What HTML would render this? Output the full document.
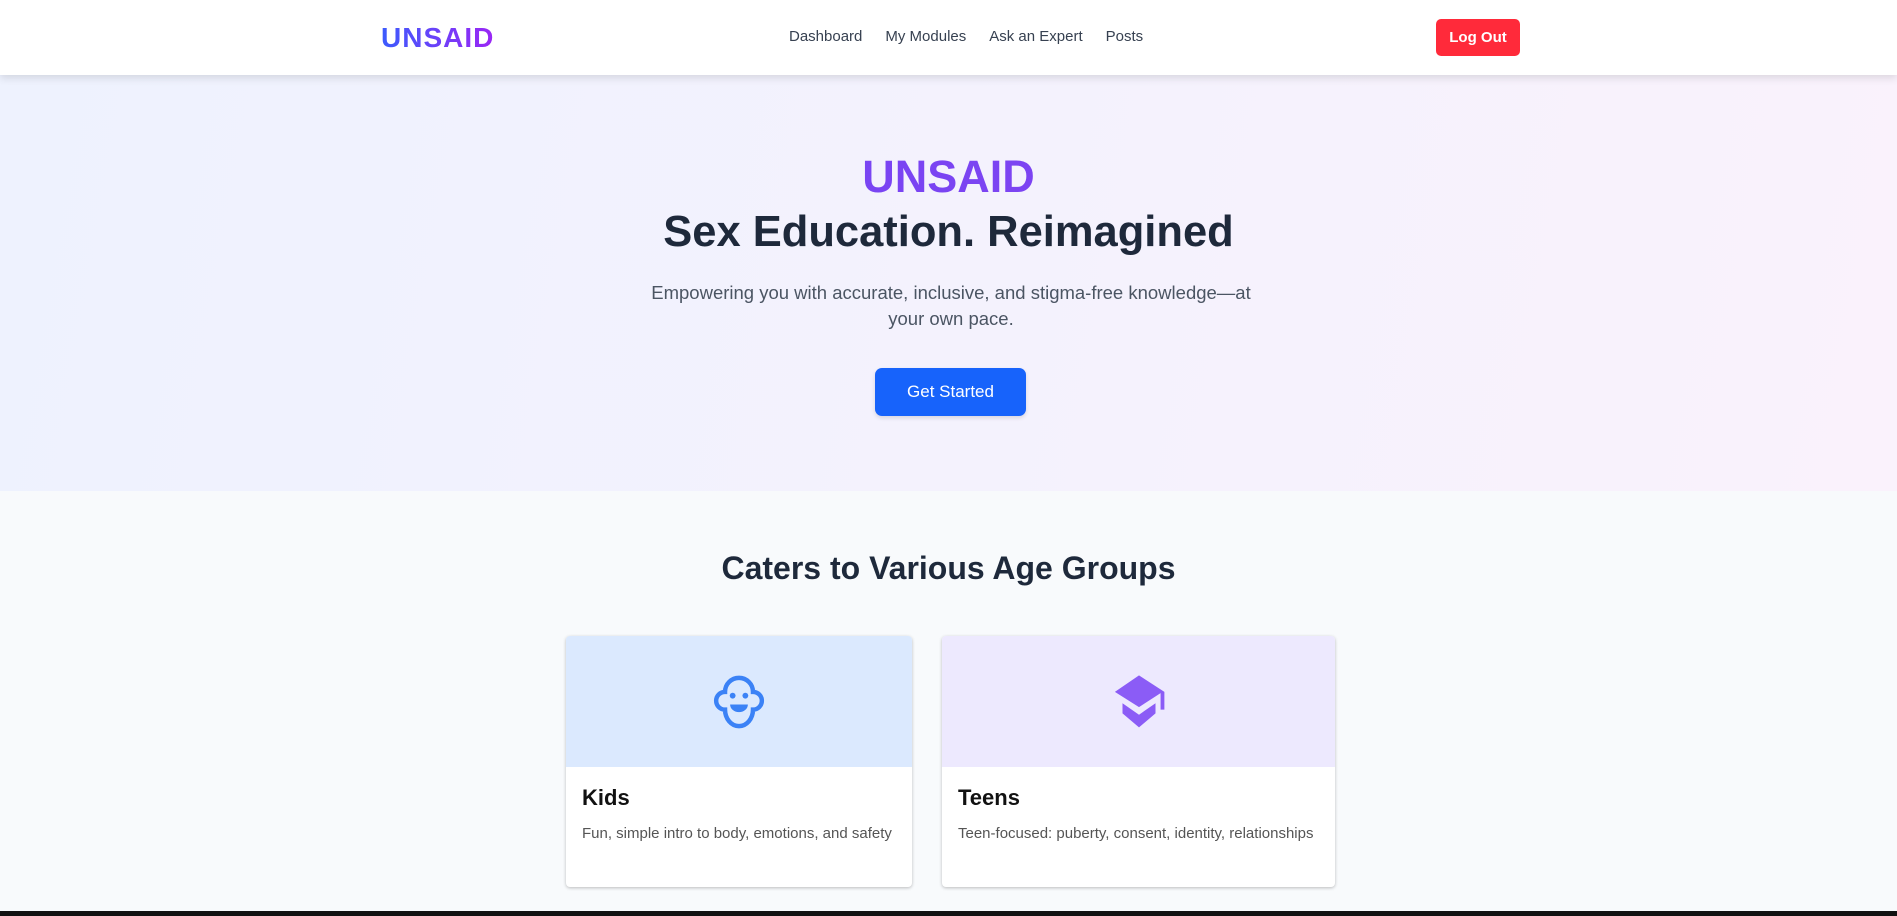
<!DOCTYPE html>
<html><head><meta charset="utf-8"><style>
*{margin:0;padding:0;box-sizing:border-box}
body{width:1897px;height:916px;overflow:hidden;font-family:"Liberation Sans",Arial,sans-serif;background:#f8fafc;position:relative}
nav{position:absolute;top:0;left:0;width:1897px;height:75px;background:#fff;box-shadow:0 3px 8px rgba(0,0,0,.12);z-index:2}
.logo{position:absolute;left:381px;top:22px;font-size:28px;font-weight:bold;letter-spacing:1px;background:linear-gradient(90deg,#3b5bfd,#9b26f5);-webkit-background-clip:text;color:transparent}
.links{position:absolute;left:789px;top:28px;font-size:15px;color:#374151;display:flex;gap:23px}
.btn-out{position:absolute;left:1436px;top:19px;width:84px;height:37px;background:#ff2a3a;color:#fff;border-radius:5px;font-size:15px;font-weight:bold;text-align:center;line-height:37px}
.hero{position:absolute;top:75px;left:0;width:1897px;height:416px;background:linear-gradient(100deg,#eef2fe,#f5f2fd 60%,#faf2fc);text-align:center}
.h-logo{position:absolute;left:0;width:100%;top:76px;font-size:45px;font-weight:bold;background:linear-gradient(90deg,#6a4cf5,#8b3cf0);-webkit-background-clip:text;color:transparent}
h1{position:absolute;left:0;width:100%;top:133px;font-size:43.5px;color:#1e293b;font-weight:bold}
.sub{position:absolute;left:638px;width:626px;top:205px;font-size:18.5px;line-height:26px;color:#4b5563}
.gs{position:absolute;left:875px;top:293px;width:151px;height:48px;background:#1763fb;border-radius:7px;color:#fff;font-size:17px;line-height:48px;box-shadow:0 2px 4px rgba(0,0,0,.12)}
h2{position:absolute;top:550px;left:0;width:100%;text-align:center;font-size:32px;color:#1e293b;font-weight:bold}
.card{position:absolute;top:636px;height:251px;background:#fff;border-radius:4px;box-shadow:0 1px 3px rgba(0,0,0,.25);overflow:hidden}
.card .top{height:131px;display:flex;align-items:center;justify-content:center}
.card h3{font-size:22px;color:#111;margin:18px 0 0 16px}
.card p{font-size:15px;color:#555;margin:14px 0 0 16px}
footer{position:absolute;top:911px;left:0;width:1897px;height:5px;background:#111}
</style></head><body>
<nav><div class="logo">UNSAID</div>
<div class="links"><span>Dashboard</span><span>My Modules</span><span>Ask an Expert</span><span>Posts</span></div>
<div class="btn-out">Log Out</div></nav>
<div class="hero">
<div class="h-logo">UNSAID</div>
<h1>Sex Education. Reimagined</h1>
<div class="sub">Empowering you with accurate, inclusive, and stigma-free knowledge—at your own pace.</div>
<div class="gs">Get Started</div>
</div>
<h2>Caters to Various Age Groups</h2>
<div class="card" style="left:566px;width:346px"><div class="top" style="background:#dbe9fe">
<svg width="66" height="56" viewBox="0 0 52 44"><path d="M15 14a11 11 0 0 1 22 0a5 5 0 0 1 0 14a11 13 0 0 1-22 0a5 5 0 0 1 0-14z" fill="none" stroke="#3b82f6" stroke-width="3.5"/><circle cx="21" cy="17" r="2.3" fill="#3b82f6"/><circle cx="31" cy="17" r="2.3" fill="#3b82f6"/><path d="M19 24h14a7 6 0 0 1-14 0z" fill="#3b82f6"/></svg></div>
<h3>Kids</h3><p>Fun, simple intro to body, emotions, and safety</p></div>
<div class="card" style="left:942px;width:393px"><div class="top" style="background:#ede9fe">
<svg width="66" height="56" viewBox="0 0 52 44"><path d="M26 1L7 14l19 12 17-11v13h3V14z" fill="#8b5cf6"/><path d="M13 23v8l13 11 13-11v-8l-13 9z" fill="#8b5cf6"/></svg></div>
<h3>Teens</h3><p>Teen-focused: puberty, consent, identity, relationships</p></div>
<footer></footer>
</body></html>
